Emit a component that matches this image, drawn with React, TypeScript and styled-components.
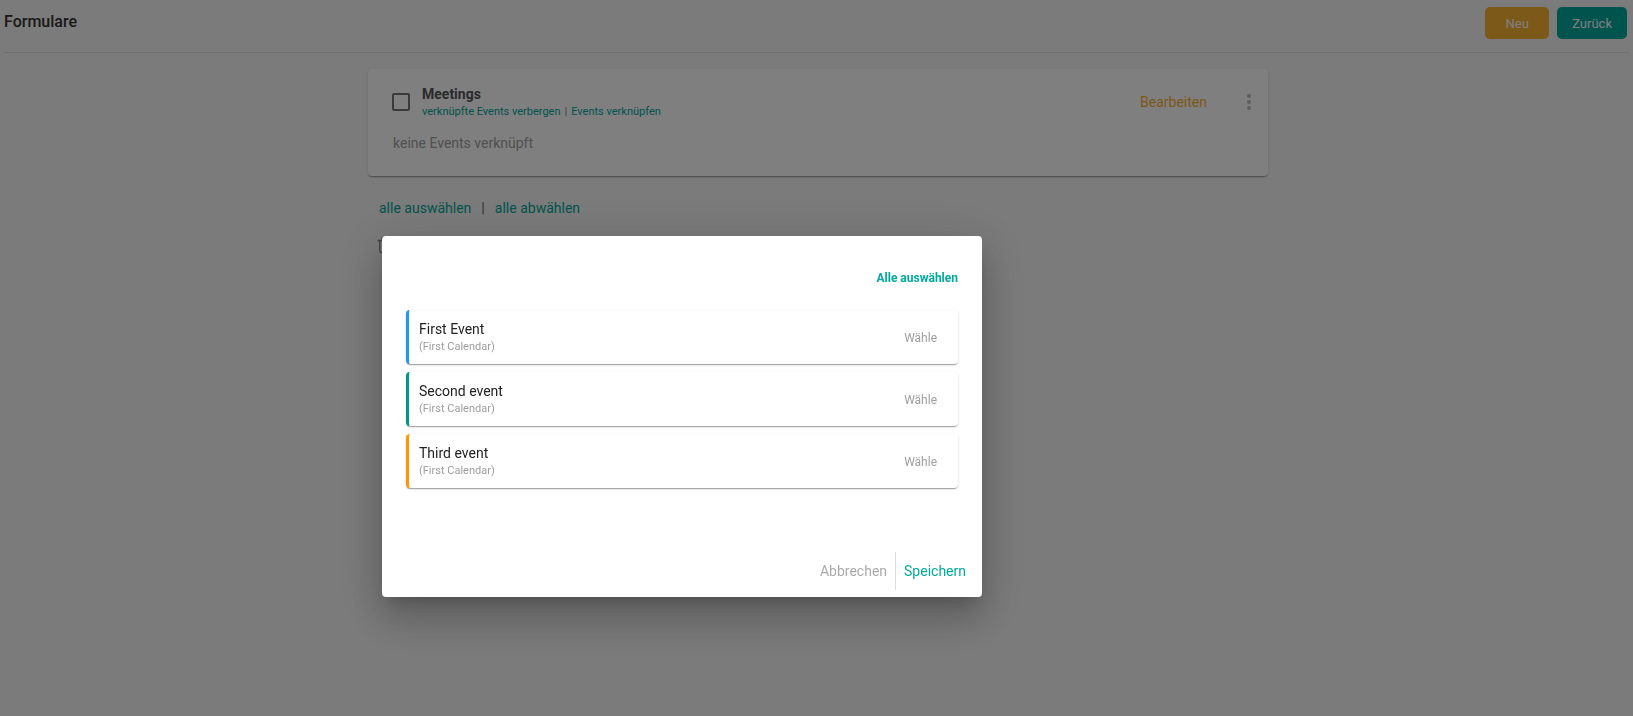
import React from "react";
import styled, { createGlobalStyle } from "styled-components";
import { Trash2 } from "lucide-react";

const GlobalStyle = createGlobalStyle`
    html, body {
        margin: 0;
        padding: 0;
        background: #f6f6f6;
        font-family: Roboto, "Liberation Sans", Arial, sans-serif;
    }
    * {
        box-sizing: border-box;
    }
`;

const TEAL = "#00a99d";
const AMBER = "#f8b133";

const Page = styled.div`
    min-height: 100vh;
`;

const Header = styled.header`
    display: flex;
    justify-content: space-between;
    align-items: flex-start;
    margin: 0 4px;
    padding: 7px 2px 13px 0;
    border-bottom: 1px solid #dcdcdc;
`;

const PageTitle = styled.h1`
    margin: 0;
    font-size: 16px;
    font-weight: 500;
    line-height: 30px;
    color: #333;
`;

const HeaderActions = styled.div`
    display: flex;
    gap: 8px;
`;

const HeaderButton = styled.button<{ $color: string }>`
    height: 32px;
    min-width: 64px;
    padding: 0 15px;
    border: none;
    border-radius: 5px;
    background: ${(p) => p.$color};
    color: #fff;
    font-family: inherit;
    font-size: 13px;
    cursor: pointer;
`;

const Main = styled.main`
    padding-left: 3px;
`;

const Column = styled.div`
    width: 900px;
    margin: 16px auto 0;
`;

const FormCard = styled.section`
    background: #fff;
    border-radius: 4px;
    padding: 16px 7px 23px 24px;
    box-shadow: 0 2px 1px -1px rgba(0, 0, 0, 0.2), 0 1px 1px 0 rgba(0, 0, 0, 0.14),
        0 1px 3px 0 rgba(0, 0, 0, 0.12);
`;

const CardHeader = styled.div`
    display: flex;
    align-items: center;
    height: 34px;
`;

const Checkbox = styled.span`
    width: 18px;
    height: 18px;
    border: 2px solid rgba(0, 0, 0, 0.54);
    border-radius: 2px;
    margin-right: 12px;
    flex-shrink: 0;
`;

const TitleBlock = styled.div`
    display: flex;
    flex-direction: column;
    flex: 1;
`;

const FormName = styled.div`
    font-size: 14px;
    font-weight: 700;
    line-height: 18px;
    color: #555;
`;

const LinkLine = styled.div`
    margin-top: 2px;
    font-size: 11px;
    line-height: 14px;
    color: ${TEAL};

    span {
        color: #888;
        margin: 0 4px;
    }
`;

const EditButton = styled.button`
    border: none;
    background: none;
    padding: 0;
    margin-right: 30px;
    font-family: inherit;
    font-size: 14px;
    color: ${AMBER};
    cursor: pointer;
`;

const MoreButton = styled.button`
    width: 24px;
    height: 24px;
    padding: 0;
    border: none;
    background: none;
    display: flex;
    flex-direction: column;
    align-items: center;
    justify-content: center;
    gap: 2px;

    i {
        width: 4px;
        height: 4px;
        border-radius: 50%;
        background: #bbb;
    }
`;

const EmptyText = styled.p`
    margin: 14px 0 0 1px;
    font-size: 14px;
    line-height: 20px;
    color: #a0a0a0;
`;

const SelectRow = styled.div`
    display: flex;
    align-items: center;
    margin-top: 22px;
    padding-left: 11px;
    font-size: 14px;
    line-height: 20px;
    color: ${TEAL};

    b {
        color: #777;
        margin: 0 10px;
        font-weight: 700;
    }
`;

const ToolRow = styled.div`
    margin-top: 18px;
    padding-left: 8px;
    color: #888;
    display: flex;
`;

const Backdrop = styled.div`
    position: fixed;
    inset: 0;
    z-index: 10;
    background: rgba(0, 0, 0, 0.5);
    display: flex;
    align-items: flex-start;
    padding: 236px 0 0 382px;
`;

const Dialog = styled.div`
    width: 600px;
    background: #fff;
    border-radius: 4px;
    box-shadow: 0 11px 15px -7px rgba(0, 0, 0, 0.2), 0 24px 38px 3px rgba(0, 0, 0, 0.14),
        0 9px 46px 8px rgba(0, 0, 0, 0.12);
`;

const DialogContent = styled.div`
    padding: 34px 24px 57px;
`;

const DialogToolbar = styled.div`
    display: flex;
    justify-content: flex-end;
    margin-bottom: 24px;
`;

const SelectAll = styled.button`
    border: none;
    background: none;
    padding: 0;
    font-family: inherit;
    font-size: 12px;
    font-weight: 700;
    line-height: 16px;
    color: ${TEAL};
    cursor: pointer;
`;

const EventList = styled.div`
    display: flex;
    flex-direction: column;
    gap: 8px;
`;

const EventCard = styled.div<{ $accent: string }>`
    display: flex;
    align-items: center;
    height: 54px;
    padding: 0 21px 0 10px;
    border-left: 3px solid ${(p) => p.$accent};
    border-radius: 4px;
    background: #fff;
    box-shadow: 0 2px 1px -1px rgba(0, 0, 0, 0.2), 0 1px 1px 0 rgba(0, 0, 0, 0.14),
        0 1px 3px 0 rgba(0, 0, 0, 0.12);
`;

const EventText = styled.div`
    flex: 1;
    display: flex;
    flex-direction: column;
`;

const EventTitle = styled.div`
    font-size: 14px;
    line-height: 18px;
    color: #222;
`;

const EventCalendar = styled.div`
    margin-top: 2px;
    font-size: 11px;
    line-height: 14px;
    color: #9e9e9e;
`;

const ChooseButton = styled.button`
    border: none;
    background: none;
    padding: 1px 0 0;
    font-family: inherit;
    font-size: 12px;
    color: #9e9e9e;
    cursor: pointer;
`;

const DialogActions = styled.div`
    display: flex;
    justify-content: flex-end;
    padding: 7px 8px 7px;
`;

const ActionButton = styled.button<{ $primary?: boolean }>`
    height: 38px;
    padding: 0 8px;
    border: none;
    border-left: ${(p) => (p.$primary ? "1px solid #dcdcdc" : "none")};
    background: none;
    font-family: inherit;
    font-size: 14px;
    color: ${(p) => (p.$primary ? TEAL : "#aaa")};
    cursor: pointer;
`;

const events = [
    { title: "First Event", calendar: "First Calendar", color: "#2196f3" },
    { title: "Second event", calendar: "First Calendar", color: "#009688" },
    { title: "Third event", calendar: "First Calendar", color: "#ff9800" },
];

const App = () => {
    return (
        <Page>
            <GlobalStyle />
            <Header>
                <PageTitle>Formulare</PageTitle>
                <HeaderActions>
                    <HeaderButton $color={AMBER}>Neu</HeaderButton>
                    <HeaderButton $color={TEAL}>Zurück</HeaderButton>
                </HeaderActions>
            </Header>

            <Main>
                <Column>
                    <FormCard>
                        <CardHeader>
                            <Checkbox />
                            <TitleBlock>
                                <FormName>Meetings</FormName>
                                <LinkLine>
                                    verknüpfte Events verbergen<span>|</span>Events verknüpfen
                                </LinkLine>
                            </TitleBlock>
                            <EditButton>Bearbeiten</EditButton>
                            <MoreButton>
                                <i />
                                <i />
                                <i />
                            </MoreButton>
                        </CardHeader>
                        <EmptyText>keine Events verknüpft</EmptyText>
                    </FormCard>

                    <SelectRow>
                        alle auswählen<b>|</b>alle abwählen
                    </SelectRow>
                    <ToolRow>
                        <Trash2 size={18} strokeWidth={2} />
                    </ToolRow>
                </Column>
            </Main>

            <Backdrop>
                <Dialog>
                    <DialogContent>
                        <DialogToolbar>
                            <SelectAll>Alle auswählen</SelectAll>
                        </DialogToolbar>
                        <EventList>
                            {events.map((ev) => (
                                <EventCard key={ev.title} $accent={ev.color}>
                                    <EventText>
                                        <EventTitle>{ev.title}</EventTitle>
                                        <EventCalendar>({ev.calendar})</EventCalendar>
                                    </EventText>
                                    <ChooseButton>Wähle</ChooseButton>
                                </EventCard>
                            ))}
                        </EventList>
                    </DialogContent>
                    <DialogActions>
                        <ActionButton>Abbrechen</ActionButton>
                        <ActionButton $primary>Speichern</ActionButton>
                    </DialogActions>
                </Dialog>
            </Backdrop>
        </Page>
    );
};

export default App;
